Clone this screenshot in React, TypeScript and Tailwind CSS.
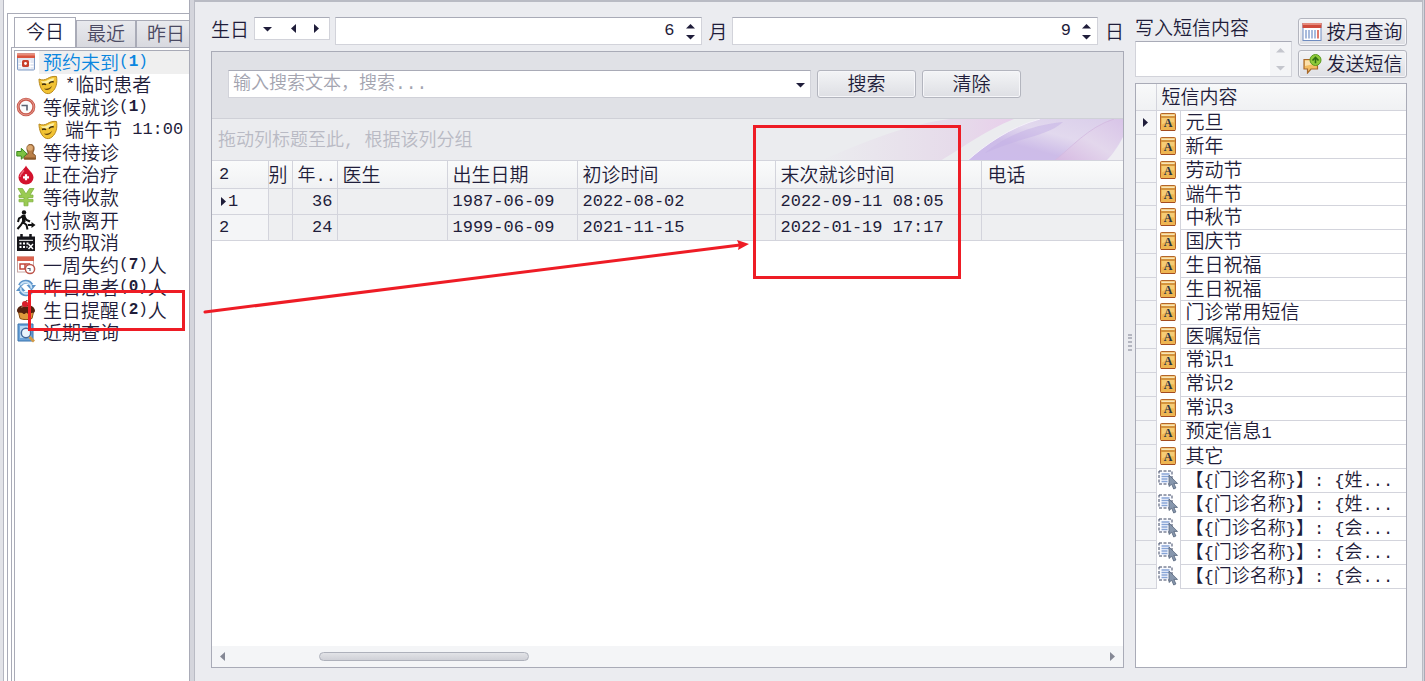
import React, { useState } from 'react'
import clsx from 'clsx'

interface QueueItem {
  label: string
  icon: React.ReactNode
  count?: number
  suffix?: string
  child?: boolean
  active?: boolean
}

interface Visit {
  age: number
  birthday: string
  firstVisit: string
  lastVisit: string
}

/** Latin runs are set in a fixed-width face a little smaller than the Chinese text */
function Mixed({ text }: { text: string }) {
  return (
    <>
      {text.split(/([\x20-\x7e]+)/).map((part, i) =>
        i % 2 ? (
          <span key={i} className="font-['Liberation_Mono',monospace] text-[17px] leading-none whitespace-pre">
            {part}
          </span>
        ) : (
          part
        )
      )}
    </>
  )
}

function CalendarIcon() {
  return (
    <svg className="h-5 w-5" viewBox="0 0 20 20" aria-hidden="true">
      <rect x="1.500" y="2" width="17" height="16" rx="1" fill="#e3e8f3" stroke="#7f9ac4" />
      <path d="M1 1.500h18V6H1z" fill="#d9543f" />
      <path d="M1 1.500h18V3.500H1z" fill="#e88d7b" />
      <path d="M2.500 11.500h15M2.500 14.500h15M6 8v9M14 8v9" stroke="#fff" />
      <rect x="6" y="8" width="7" height="7" rx="1.500" fill="#c8402d" />
      <circle cx="9.500" cy="11.500" r="1.400" fill="#fff" />
    </svg>
  )
}

function MaskIcon() {
  return (
    <svg className="h-5 w-5" viewBox="0 0 20 20" aria-hidden="true">
      <path
        d="M1 4c3 1.500 6 1 8.500-.5C12 2 15 1 18.500 1.500c.8 5 .3 10-3 14-2 2.500-4.500 3.500-7 3C3.500 17 1 10 1 4z"
        fill="#f1c233"
        stroke="#b98a1e"
      />
      <path d="M3 6c3 .6 5 0 7-1 2-1.200 4-1.800 6.500-1.800-1 3-4 4.500-7 5S4 8.500 3 6z" fill="#fdf0a4" />
      <path d="M4 9.500c1.500-.8 3-.7 4 .3M11 8.500c1.300-1.500 3-2 4.700-1.500" stroke="#38280a" strokeWidth="1.500" fill="none" />
      <path d="M6 13.500c3.300.8 6-.3 8-2.700-.8 2.700-2.400 3.900-4.400 4.200-1.600 0-2.800-.4-3.600-1.500z" fill="#6d4c10" />
    </svg>
  )
}

function ClockIcon() {
  return (
    <svg className="h-5 w-5" viewBox="0 0 20 20" aria-hidden="true">
      <circle cx="10" cy="10" r="7.800" fill="#fbfbfb" stroke="#c9594c" strokeWidth="3" />
      <circle cx="10" cy="10" r="8" fill="none" stroke="#e9a79d" strokeWidth=".8" />
      <path d="M5.500 8.500h5.500v5" fill="none" stroke="#5a6272" strokeWidth="1.600" />
    </svg>
  )
}

function ReceptionIcon() {
  return (
    <svg className="h-5 w-5" viewBox="0 0 20 20" aria-hidden="true">
      <path d="M8 17c0-4 1.500-4.500 4-5v-2c-1.500-2-2-7.500 2.500-7.500s4 5.500 2.500 7.500v2c2 .5 2.800 1 2.800 5z" fill="#b97f48" stroke="#7c4d21" />
      <circle cx="14" cy="6" r="2.800" fill="#dba972" />
      <path d="M8.500 15.500h11v2h-11z" fill="#8b5727" />
      <path d="M.8 9.500h4.500V6.300L11 11.800l-5.700 5.400V14H.8z" fill="#7dc242" stroke="#3d8a20" />
    </svg>
  )
}

function BloodIcon() {
  return (
    <svg className="h-5 w-5" viewBox="0 0 20 20" aria-hidden="true">
      <path d="M10 .5c1.500 4 7.500 7 7.500 12a7.500 7 0 0 1-15 0C2.500 7.500 8.500 4.500 10 .5z" fill="#d3122d" />
      <path d="M4 12c.2-3 2.500-4.800 4-6.500" stroke="#ef6b7c" strokeWidth="1.400" fill="none" />
      <path d="M10 9.300v6M7 12.300h6" stroke="#fff" strokeWidth="2.200" />
    </svg>
  )
}

function YuanIcon() {
  return (
    <svg className="h-5 w-5" viewBox="0 0 20 20" aria-hidden="true">
      <path
        d="M2 1.500h4.500L10 7l3.500-5.500H18l-4 6.500h3v2.500h-5v1.800h5v2.500h-5v4H8v-4H3v-2.500h5v-1.800H3V8h3z"
        fill="#9acb52"
        stroke="#7fb040"
        strokeWidth=".8"
      />
    </svg>
  )
}

function LeaveIcon() {
  return (
    <svg className="h-5 w-5" viewBox="0 0 20 20" aria-hidden="true">
      <circle cx="8" cy="2.500" r="2.200" fill="#111" />
      <path d="M7.500 5.500 7 12l3.500 3 1 4.500M7 11.500 5 15l-3.500 4M7.500 6 3 8.500 2 12M8 6l2.500 4 3.500 1.500" fill="none" stroke="#111" strokeWidth="2" />
      <path d="M5.500 5h4v7h-3z" fill="#111" />
      <path d="M12 14h3.500v-2l4 3-4 3v-2H12z" fill="#111" />
    </svg>
  )
}

function CancelIcon() {
  return (
    <svg className="h-5 w-5" viewBox="0 0 20 20" aria-hidden="true">
      <path d="M1 3.500h18V18H1z" fill="#15151a" />
      <path d="M5.500 1v4M14.500 1v4" stroke="#15151a" strokeWidth="2.500" />
      <path d="M3 7.300h14" stroke="#fff" strokeWidth="1" />
      <path d="M3.500 10.500h9.500M3.500 14h8" stroke="#fff" strokeWidth="2" strokeDasharray="2 1.500" />
      <path d="m12.500 11 4.500 5m0-5-4.500 5" stroke="#fff" strokeWidth="1.400" />
    </svg>
  )
}

function MissedIcon() {
  return (
    <svg className="h-5 w-5" viewBox="0 0 20 20" aria-hidden="true">
      <rect x="1.500" y="2" width="16" height="15" fill="#fff" stroke="#c8a7a4" />
      <path d="M1 1.500h17V6H1z" fill="#d9634f" />
      <path d="M4 9h5v5H4zM9 9h5" fill="none" stroke="#c4473a" strokeWidth="1.500" />
      <circle cx="14" cy="14" r="4.600" fill="#fff" stroke="#bd544a" strokeWidth="1.500" />
      <path d="M11.500 13.500H14V16" fill="none" stroke="#5a6272" strokeWidth="1.200" />
    </svg>
  )
}

function RefreshIcon() {
  return (
    <svg className="h-5 w-5" viewBox="0 0 20 20" aria-hidden="true">
      <path d="M4 7.500C6 3 12.500 2 15.500 7" fill="none" stroke="#5b93c9" strokeWidth="4" />
      <path d="M10.500 7H20l-4.500 5.500z" fill="#5b93c9" />
      <path d="M16 12.500c-2 4.500-8.500 5.500-11.500.5" fill="none" stroke="#5b93c9" strokeWidth="4" />
      <path d="M9.500 13H0l4.500-5.500z" fill="#5b93c9" />
      <path d="M4.500 7C7 3.500 12 3 15 7.500l.5 3M15.500 13c-2.500 3.500-7.500 4-10.500-.5l-.5-3" fill="none" stroke="#c9e2f6" strokeWidth="1.800" />
    </svg>
  )
}

function CakeIcon() {
  return (
    <svg className="h-5 w-5" viewBox="0 0 20 20" aria-hidden="true">
      <path d="M2 10h16l-2 8.500c-3 1.500-9 1.500-12 0z" fill="#dd9a3c" stroke="#8c5012" />
      <path d="M1 11c0-4 4-6 9-6s9 2 9 6c-1 3-3 1-4 2.500s-3 1-4-.5-2.500 2.500-4 .5-5 1-6-2.500z" fill="#54220f" />
      <path d="M5 7.500c2-1.300 5-1.500 7-1" stroke="#a1694f" strokeWidth="1.200" fill="none" />
      <circle cx="9" cy="4" r="3" fill="#d81e2b" />
      <path d="M9.500 2c0-1 1-2 3-2" stroke="#7a3a20" fill="none" />
    </svg>
  )
}

function RecentIcon() {
  return (
    <svg className="h-5 w-5" viewBox="0 0 20 20" aria-hidden="true">
      <path d="M2 1h15v17H2z" fill="#6ba4da" stroke="#3973ad" />
      <path d="M4 3h11v12H4z" fill="#b8d9f4" />
      <circle cx="10" cy="10" r="4.700" fill="#e9f5fd" stroke="#42689a" strokeWidth="1.500" />
      <path d="m13.500 14 4.500 4.500" stroke="#d39a45" strokeWidth="2.800" />
    </svg>
  )
}

function TemplateIcon() {
  return (
    <svg className="h-[18px] w-4" viewBox="0 0 16 18" aria-hidden="true">
      <rect x=".5" y=".5" width="15" height="17" rx="1" fill="#eeb551" stroke="#b4652a" />
      <path d="M1.500 1.500h13V3h-13z" fill="#f8e4b9" />
      <path d="M1 4h14" stroke="#b97229" />
      <path d="M1 17.500h14" stroke="#a34b20" />
      <path d="M2 5h12v4.500C9 9 5 10 2 11.500z" fill="#f6cc74" />
      <text x="8" y="14" textAnchor="middle" fontSize="12" fontWeight="700" fontFamily="Liberation Serif, serif" fill="#2c3444">
        A
      </text>
    </svg>
  )
}

function FieldIcon() {
  return (
    <svg className="h-5 w-5" viewBox="0 0 20 20" aria-hidden="true">
      <path d="M1 1h13v13H1z" fill="#f8faff" stroke="#3c4663" strokeDasharray="3 1.500" />
      <path d="M3.500 4h8M3.500 6.500h8M3.500 9h6M3.500 11.500h6" stroke="#86a4d6" strokeWidth="1.300" />
      <path d="M11 5v11.500l2.700-2.300 2 4.800 2.200-1-2-4.600h3.600z" fill="#8797ad" stroke="#55647b" strokeWidth=".8" />
    </svg>
  )
}

function MonthIcon() {
  return (
    <svg className="h-5 w-5" viewBox="0 0 20 20" aria-hidden="true">
      <rect x="1" y="1.500" width="18" height="17" fill="#fff" stroke="#6f8cc0" />
      <path d="M.5 1h19v5H.5z" fill="#cf4b3b" />
      <path d="M.5 1h19v2H.5z" fill="#e48a7b" />
      <path d="M4 8v8.500M7 8v8.500M10 8v8.500M13 8v8.500" stroke="#a8bbdc" strokeWidth="2" />
      <path d="M16 8v8.500" stroke="#e0796a" strokeWidth="2" />
    </svg>
  )
}

function SendIcon() {
  return (
    <svg className="h-5 w-5" viewBox="0 0 20 20" aria-hidden="true">
      <path d="M2 5.500h13.500V15H9l-3.500 4v-4H2z" fill="#f3bd62" stroke="#a8692a" strokeWidth="1.200" />
      <path d="M3 6.500h11v3L3 12z" fill="#fbe0aa" />
      <circle cx="13.500" cy="6" r="5.500" fill="#8fca3a" stroke="#5a9a1f" />
      <path d="m10.500 6.500 3-3.200 3 3.200M13.500 4v5.300" fill="none" stroke="#2f6d12" strokeWidth="1.600" />
    </svg>
  )
}

const arrowPaths = {
  down: 'M0 3h9L4.500 7.500z',
  up: 'M0 6.500h9L4.500 2z',
  left: 'M7 0v9L2 4.500z',
  right: 'M2 0v9l5-4.500z',
}

const arrowColors = { dark: '#1f1d3a', gray: '#858895', pale: '#c4c6cd' }

function Arrow({ dir, tone = 'dark' }: { dir: keyof typeof arrowPaths; tone?: keyof typeof arrowColors }) {
  return (
    <svg className="h-[9px] w-[9px] shrink-0" viewBox="0 0 9 9" aria-hidden="true">
      <path d={arrowPaths[dir]} fill={arrowColors[tone]} />
    </svg>
  )
}

const queue: QueueItem[] = [
  { label: '预约未到', icon: <CalendarIcon />, count: 1, active: true },
  { label: '*临时患者', icon: <MaskIcon />, child: true },
  { label: '等候就诊', icon: <ClockIcon />, count: 1 },
  { label: '端午节 11:00', icon: <MaskIcon />, child: true },
  { label: '等待接诊', icon: <ReceptionIcon /> },
  { label: '正在治疗', icon: <BloodIcon /> },
  { label: '等待收款', icon: <YuanIcon /> },
  { label: '付款离开', icon: <LeaveIcon /> },
  { label: '预约取消', icon: <CancelIcon /> },
  { label: '一周失约', icon: <MissedIcon />, count: 7, suffix: '人' },
  { label: '昨日患者', icon: <RefreshIcon />, count: 0, suffix: '人' },
  { label: '生日提醒', icon: <CakeIcon />, count: 2, suffix: '人' },
  { label: '近期查询', icon: <RecentIcon /> },
]

const visits: Visit[] = [
  { age: 36, birthday: '1987-06-09', firstVisit: '2022-08-02', lastVisit: '2022-09-11 08:05' },
  { age: 24, birthday: '1999-06-09', firstVisit: '2021-11-15', lastVisit: '2022-01-19 17:17' },
]

const templates = [
  '元旦', '新年', '劳动节', '端午节', '中秋节', '国庆节', '生日祝福', '生日祝福',
  '门诊常用短信', '医嘱短信', '常识1', '常识2', '常识3', '预定信息1', '其它',
]

const fieldTemplates = [
  '【{门诊名称}】: {姓...',
  '【{门诊名称}】: {姓...',
  '【{门诊名称}】: {会...',
  '【{门诊名称}】: {会...',
  '【{门诊名称}】: {会...',
]

const tabs = ['今日', '最近', '昨日']

function Sidebar() {
  const [tab, setTab] = useState('今日')

  return (
    <aside className="flex w-[189px] shrink-0 overflow-hidden bg-[#e2e3e8] pl-[3px]">
      <div className="flex flex-1 border-l border-[#b4b6c0] bg-white pt-[13px] pl-[3px]">
        <div className="flex min-w-0 flex-1 flex-col border-t border-l border-[#a9abb7] pt-[3px] pl-[3px]">
          <div role="tablist" className="flex h-[30px] items-end pl-[3px]">
            {tabs.map((name) => (
              <button
                key={name}
                type="button"
                role="tab"
                aria-selected={tab === name}
                onClick={() => setTab(name)}
                className={clsx(
                  'flex shrink-0 items-center justify-center border border-b-0 border-[#a9abb7] pb-[2px]',
                  tab === name ? 'h-[30px] w-[62px] bg-white' : 'h-[27px] w-[60px] bg-linear-to-b from-[#e9eaee] to-[#d8d9df] text-[#4b4a63]'
                )}
              >
                {name}
              </button>
            ))}
          </div>
          <div className="flex min-h-0 flex-1 border-t border-l border-[#a9abb7] pt-[2px] pl-[2px]">
            <div className="min-w-0 flex-1 border-t border-l border-[#a9abb7]">
              <ul className="grid h-[293px] grid-rows-13">
                {queue.map((item) => (
                  <li key={item.label} className={clsx('flex items-center gap-[3px]', item.child ? 'pl-[23px]' : 'pl-px')}>
                    <span className="shrink-0">{item.icon}</span>
                    <a
                      href="#queue"
                      className={clsx(
                        'flex h-full flex-1 items-center pb-px pl-1 leading-5 whitespace-nowrap',
                        item.active && 'bg-[#efefef] text-[#0a86e0]'
                      )}
                    >
                      <Mixed text={item.label} />
                      {item.count !== undefined && (
                        <span className="font-['Liberation_Mono',monospace] text-base leading-5">
                          (<b className="font-bold">{item.count}</b>)
                        </span>
                      )}
                      {item.suffix}
                    </a>
                  </li>
                ))}
              </ul>
            </div>
          </div>
        </div>
      </div>
    </aside>
  )
}

function NumberBox({ id, value, onChange }: { id: string; value: number; onChange: (n: number) => void }) {
  return (
    <div className="flex h-7 min-w-0 flex-1 items-center border border-[#d2d3da] border-t-[#a9abb7] bg-white pr-px">
      <input
        id={id}
        type="text"
        value={value}
        onChange={(e) => onChange(Number(e.target.value) || 0)}
        className="w-full min-w-0 flex-1 pr-[6px] text-right font-['Liberation_Mono',monospace] text-[17px] outline-none"
      />
      <span className="flex flex-col gap-px px-[5px]">
        <button type="button" aria-label="+" onClick={() => onChange(value + 1)} className="flex">
          <Arrow dir="up" />
        </button>
        <button type="button" aria-label="-" onClick={() => onChange(value - 1)} className="flex">
          <Arrow dir="down" />
        </button>
      </span>
    </div>
  )
}

function GroupBand() {
  return (
    <div className="flex h-[42px] shrink-0 items-center justify-between overflow-hidden border-t border-[#cfd0d7] bg-[#ebecef]">
      <span className="pb-[3px] pl-[6px] text-lg whitespace-nowrap text-[#b9bac4]">
        <Mixed text="拖动列标题至此, 根据该列分组" />
      </span>
      <svg className="h-[42px] w-[303px] shrink-0" viewBox="0 0 303 42" aria-hidden="true">
        <defs>
          <linearGradient id="pink" x1="0" x2="1">
            <stop offset="0" stopColor="#ebecef" />
            <stop offset=".7" stopColor="#e6dbea" />
            <stop offset="1" stopColor="#e8cfeb" />
          </linearGradient>
          <linearGradient id="violet" x1="0" y1="1" x2="1" y2="0">
            <stop offset="0" stopColor="#cdbcec" />
            <stop offset=".35" stopColor="#cdbce8" />
            <stop offset=".6" stopColor="#e2d9ee" />
            <stop offset="1" stopColor="#d9cdea" />
          </linearGradient>
          <linearGradient id="petal" x1="0" y1="1" x2="1" y2="0">
            <stop offset="0" stopColor="#d6b8e2" />
            <stop offset=".5" stopColor="#e3d7ec" />
            <stop offset="1" stopColor="#d8c4e8" />
          </linearGradient>
        </defs>
        <path d="M0 42C50 20 90 5 130 0h64c-30 12-50 28-74 42z" fill="url(#pink)" />
        <path d="M147 42C165 26 190 8 220 0h83v42z" fill="url(#violet)" />
        <path d="M165 34c20-16 45-28 78-31-15 14-45 16-78 31z" fill="#c4b0e6" opacity=".5" />
        <path d="M234 42c16-12 34-34 60-42h9v18c-6 8-10 18-17 24z" fill="url(#petal)" />
        <path d="M286 42c7-7 12-14 17-24v24z" fill="#eeedf2" />
        <path d="M147 42C165 26 190 8 220 0" fill="none" stroke="#f4f0f9" />
        <path d="M234 42c16-12 34-34 60-42" fill="none" stroke="#d3b9e0" strokeWidth=".8" />
      </svg>
    </div>
  )
}

function VisitTable() {
  const cell = 'border-r border-b border-[#d3d4dc] pl-[5px]'
  const head = 'border-r border-b border-[#d3d4dc] pb-[2px] pl-[5px] font-[350]'
  const mono = "font-['Liberation_Mono',monospace] text-[17px]"

  return (
    <table className="w-full table-fixed border-collapse border-t border-[#d3d4dc] leading-5 whitespace-nowrap">
      <colgroup>
        <col className="w-14" />
        <col className="w-6" />
        <col className="w-[45px]" />
        <col className="w-[110px]" />
        <col className="w-[130px]" />
        <col className="w-[198px]" />
        <col className="w-[206px]" />
        <col />
      </colgroup>
      <thead>
        <tr className="h-7 bg-linear-to-b from-[#fafbfb] to-[#f0f1f3] text-left">
          <th className={clsx(mono, 'border-r border-b border-[#d3d4dc] pl-[7px] font-normal')}>2</th>
          <th className="border-r border-b border-[#d3d4dc] pb-[2px] font-[350]">别</th>
          <th className={clsx(head, 'text-lg leading-5')}><Mixed text="年.." /></th>
          <th className={head}>医生</th>
          <th className={head}>出生日期</th>
          <th className={head}>初诊时间</th>
          <th className={head}>末次就诊时间</th>
          <th className="border-b border-[#d3d4dc] pb-[2px] pl-[6px] font-[350]">电话</th>
        </tr>
      </thead>
      <tbody className={mono}>
        {visits.map((visit, i) => (
          <tr key={visit.birthday} className="h-[26px] bg-[#eeeff1]">
            <td className="border-r border-b border-[#d3d4dc] bg-[#f4f5f7] pl-[7px]">
              <span className="flex items-center">
                {i === 0 && <Arrow dir="right" />}
                {i + 1}
              </span>
            </td>
            <td className={cell} />
            <td className={clsx(cell, 'pr-1 text-right')}>{visit.age}</td>
            <td className={cell} />
            <td className={cell}>{visit.birthday}</td>
            <td className={cell}>{visit.firstVisit}</td>
            <td className={cell}>{visit.lastVisit}</td>
            <td className="border-b border-[#d3d4dc]" />
          </tr>
        ))}
      </tbody>
    </table>
  )
}

const buttonStyle =
  'flex h-7 items-center justify-center rounded-[3px] border border-[#b3b5be] bg-linear-to-b from-[#f3f4f6] to-[#dedfe4] pb-px shadow-[inset_0_0_0_1px_#f6f6f9]'

function BirthdayPanel() {
  const [month, setMonth] = useState(6)
  const [day, setDay] = useState(9)
  const [keyword, setKeyword] = useState('')

  return (
    <section className="flex min-w-0 flex-1 flex-col gap-[6px]">
      <div className="flex h-7 items-start">
        <span className="w-[43px] shrink-0 leading-6">生日</span>
        <div className="mr-[5px] flex h-[23px] w-[76px] shrink-0 items-center justify-between border border-[#d2d3da] border-t-[#a9abb7] bg-white px-2">
          <button type="button" aria-label="选择"><Arrow dir="down" /></button>
          <span className="flex gap-[14px]">
            <button type="button" aria-label="上一个"><Arrow dir="left" /></button>
            <button type="button" aria-label="下一个"><Arrow dir="right" /></button>
          </span>
        </div>
        <NumberBox id="month" value={month} onChange={setMonth} />
        <label htmlFor="month" className="w-[30px] shrink-0 pl-[7px] leading-7">月</label>
        <NumberBox id="day" value={day} onChange={setDay} />
        <label htmlFor="day" className="w-[26px] shrink-0 text-right leading-7">日</label>
      </div>

      <div className="flex min-h-0 flex-1 flex-col border border-[#a9abb7] bg-white">
        <form className="flex h-[66px] shrink-0 gap-[6px] bg-[#e0e1e6] pt-[18px] pl-4" onSubmit={(e) => e.preventDefault()}>
          <div className="flex h-7 w-[583px] items-center border border-[#d2d3da] border-t-[#a9abb7] bg-white pr-[5px] pl-1">
            <input
              type="text"
              aria-label="搜索"
              placeholder="输入搜索文本，搜索..."
              value={keyword}
              onChange={(e) => setKeyword(e.target.value)}
              className="min-w-0 flex-1 font-['Liberation_Mono','Noto_Sans_CJK_SC',monospace] text-lg outline-none placeholder:text-[#a3a4b0]"
            />
            <button type="button" aria-label="展开"><Arrow dir="down" /></button>
          </div>
          <button type="submit" className={clsx(buttonStyle, 'w-[99px]')}>搜索</button>
          <button type="button" onClick={() => setKeyword('')} className={clsx(buttonStyle, 'w-[99px]')}>清除</button>
        </form>
        <GroupBand />
        <VisitTable />
        <div className="mt-auto flex h-[21px] items-center justify-between bg-[#f4f5f7] px-[6px]">
          <button type="button" aria-label="向左" className="flex"><Arrow dir="left" tone="gray" /></button>
          <div className="flex-1 pl-[92px]">
            <div className="h-[9px] w-[210px] rounded-full border border-[#aeb1bb] bg-linear-to-b from-[#e2e3e7] to-[#d0d1d7]" />
          </div>
          <button type="button" aria-label="向右" className="flex"><Arrow dir="right" tone="gray" /></button>
        </div>
      </div>
    </section>
  )
}

function SmsPanel() {
  const rows = [
    ...templates.map((text) => ({ text, icon: <TemplateIcon />, field: false })),
    ...fieldTemplates.map((text) => ({ text, icon: <FieldIcon />, field: true })),
  ]

  return (
    <section className="flex w-[272px] shrink-0 flex-col gap-[6px]">
      <div className="flex h-[60px] gap-[6px]">
        <div className="flex min-w-0 flex-1 flex-col">
          <label htmlFor="sms" className="h-6 leading-5">写入短信内容</label>
          <div className="flex h-9 border border-[#d2d3da] border-t-[#a9abb7] bg-white">
            <textarea id="sms" className="min-w-0 flex-1 resize-none outline-none" />
            <span className="flex w-[21px] flex-col items-center justify-between bg-[#f4f5f7] py-1">
              <Arrow dir="up" tone="pale" />
              <Arrow dir="down" tone="pale" />
            </span>
          </div>
        </div>
        <div className="flex w-[109px] flex-col gap-1 pt-px">
          <button type="button" className={clsx(buttonStyle, 'gap-1')}><MonthIcon />按月查询</button>
          <button type="button" className={clsx(buttonStyle, 'gap-1')}><SendIcon />发送短信</button>
        </div>
      </div>

      <div className="min-h-0 flex-1 border border-[#a9abb7] bg-white">
        <table className="w-full table-fixed border-collapse leading-5 whitespace-nowrap">
          <colgroup>
            <col className="w-5" />
            <col className="w-6" />
            <col />
          </colgroup>
          <thead>
            <tr className="h-[26px] bg-linear-to-b from-[#f8f9fa] to-[#f0f1f3] text-left">
              <th className="border-r border-b border-[#d3d4dc]" />
              <th colSpan={2} className="border-b border-[#d3d4dc] pb-[2px] pl-[5px] font-[350]">短信内容</th>
            </tr>
          </thead>
          <tbody className="leading-[18px]">
            {rows.map((row, i) => (
              <tr key={i} className={i % 4 === 3 ? 'h-[23px]' : 'h-6'}>
                <td className="border-r border-b border-[#d3d4dc] bg-[#f4f5f7] pl-[5px]">
                  {i === 0 && <Arrow dir="right" />}
                </td>
                <td className="border-r border-[#d3d4dc]">
                  <span className="flex justify-center">{row.icon}</span>
                </td>
                <td className={clsx('border-b border-[#d3d4dc] pb-[2px] pl-[5px]', row.field && 'text-lg leading-[18px]')}>
                  <Mixed text={row.text} />
                </td>
              </tr>
            ))}
          </tbody>
        </table>
      </div>
    </section>
  )
}

/** Red marks drawn over the page: reminder entry -> last visit column */
function Marks() {
  return (
    <svg className="pointer-events-none absolute top-0 left-0 h-[681px] w-[1425px]" viewBox="0 0 1425 681" aria-hidden="true">
      <g fill="none" stroke="#ee1c25" strokeWidth="3">
        <rect x="29.500" y="291.500" width="154" height="38" />
        <rect x="754.500" y="126.500" width="205" height="151" />
        <path d="M205 312 740 245" strokeLinecap="round" />
      </g>
      <path d="m749 244-12-4 2 5-1 5z" fill="#ee1c25" />
    </svg>
  )
}

export default function App() {
  return (
    <div className="relative flex h-screen overflow-hidden bg-[#ebecf0] font-['Noto_Sans_CJK_SC',sans-serif] text-[19px] font-[350] text-[#1f1d3a]">
      <Sidebar />
      <div className="flex min-w-0 flex-1 border-x border-[#a9abb7] bg-[#d4d5dc] pr-px pl-1">
        <main className="flex min-w-0 flex-1 border-t-2 border-r border-l border-[#b9bbc4] bg-[#ebecf0] pt-[15px] pr-[15px] pb-[13px] pl-4">
          <BirthdayPanel />
          <div className="flex w-[11px] shrink-0 items-center justify-center">
            <div className="h-[17px] w-1 border-x-2 border-dotted border-[#b4b6c0]" />
          </div>
          <SmsPanel />
        </main>
      </div>
      <Marks />
    </div>
  )
}
